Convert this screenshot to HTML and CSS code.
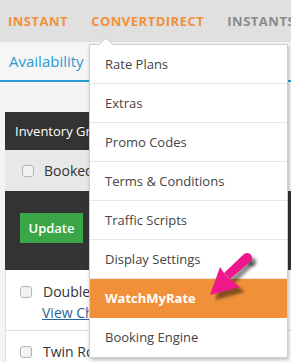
FILE: index.html
```html
<!DOCTYPE html>
<html>
<head>
<meta charset="utf-8">
<title>ConvertDirect</title>
<link rel="stylesheet" href="styles.css">
</head>
<body>
<div class="topnav">
    <span class="nav-item active">Instant</span>
    <span class="nav-item active">ConvertDirect</span>
    <span class="nav-item">InstantSites</span>
</div>

<div class="tabs">
    <span class="tab">Availability</span>
</div>

<div class="content">
    <div class="grid-head">Inventory Grid</div>
    <div class="grid-filter">
        <span class="check"></span>
        <span>Booked</span>
    </div>
    <div class="grid-tools">
        <span class="btn-update">Update</span>
    </div>
    <div class="grid-rows">
        <div class="room">
            <div class="room-line"><span class="check"></span><span>Double Room</span></div>
            <a class="room-link">View Channels</a>
        </div>
        <div class="room last">
            <div class="room-line"><span class="check"></span><span>Twin Room</span></div>
        </div>
    </div>
</div>

<div class="dropdown">
    <div class="dd-item">Rate Plans</div>
    <div class="dd-item">Extras</div>
    <div class="dd-item">Promo Codes</div>
    <div class="dd-item">Terms &amp; Conditions</div>
    <div class="dd-item">Traffic Scripts</div>
    <div class="dd-item">Display Settings</div>
    <div class="dd-item current">WatchMyRate</div>
    <div class="dd-item">Booking Engine</div>
</div>

<svg class="pointer" width="70" height="62" viewBox="0 0 70 62">
    <defs>
        <filter id="soft" x="-20%" y="-20%" width="140%" height="140%">
            <feGaussianBlur stdDeviation="1.6"/>
        </filter>
    </defs>
    <g filter="url(#soft)" transform="translate(5,5)" fill="rgba(0,0,0,.45)">
        <path d="M52 14 L32 33 L27 29 L46 10 Z"/>
        <circle cx="49" cy="12" r="4.5"/>
        <path d="M12 50 L22 22 L29 32 L42 42 Z"/>
    </g>
    <path d="M49 8 C53 8 56 13 53 16 L32 34 L26 28 L45 10 C46 9 47 8 49 8 Z" fill="#f0168c"/>
    <path d="M12 50 L22 22 L28 31 L42 42 Z" fill="#f0168c"/>
</svg>
</body>
</html>
```

FILE: styles.css
```css
* {
	box-sizing: border-box;
}

body {
	margin: 0;
	width: 291px;
	height: 362px;
	overflow: hidden;
	position: relative;
	background: #f4f4f4;
	font-family: "Open Sans", "Liberation Sans", sans-serif;
	color: #333;
}

.topnav {
	height: 42px;
	background: #e0e0e0;
	display: flex;
	padding-left: 8px;
	gap: 23px;
	white-space: nowrap;
	overflow: hidden;
}

.nav-item {
	font-size: 13px;
	font-weight: bold;
	line-height: 42px;
	letter-spacing: 0.5px;
	text-transform: uppercase;
	color: #8a8a8a;
}

.nav-item.active {
	color: #f0913a;
}

.tabs {
	height: 40px;
	background: #f6f6f6;
	border-bottom: 2px solid #2a9ad0;
	padding-left: 9px;
}

.tab {
	display: inline-block;
	font-size: 15px;
	line-height: 38px;
	color: #2a9ad0;
}

.content {
	padding: 30px 0 0 5px;
}

.grid-head {
	height: 38px;
	width: 260px;
	background: #333;
	color: #fff;
	font-size: 13px;
	line-height: 38px;
	padding-left: 10px;
}

.grid-filter {
	height: 41px;
	width: 260px;
	background: #e8e8e8;
	display: flex;
	align-items: center;
	gap: 10px;
	padding-left: 17px;
	font-size: 14px;
}

.check {
	display: inline-block;
	width: 12px;
	height: 12px;
	border: 1px solid #b5b5b5;
	border-radius: 3px;
	background: #f2f2f2;
}

.grid-tools {
	height: 79px;
	background: #333;
	padding: 22px 0 0 15px;
}

.btn-update {
	display: inline-block;
	width: 63px;
	height: 30px;
	background: #3aa648;
	color: #fff;
	font-size: 13px;
	font-weight: 600;
	line-height: 30px;
	text-align: center;
}

.grid-rows {
	background: #fff;
	border-left: 1px solid #e2e2e2;
}

.room {
	padding: 12px 0 7px 14px;
	border-bottom: 1px solid #ddd;
	font-size: 14px;
}

.room.last {
	padding-top: 11px;
}

.room-line {
	display: flex;
	align-items: center;
	gap: 11px;
	line-height: 20px;
}

.room-link {
	display: inline-block;
	margin: 1px 0 0 22px;
	color: #2a6496;
	text-decoration: underline;
	line-height: 20px;
}

.dropdown {
	position: absolute;
	left: 89px;
	top: 44px;
	width: 199px;
	background: #fff;
	border: 1px solid #cfcfcf;
	box-shadow: 1px 2px 4px rgba(0,0,0,.25);
}

.dropdown:before {
	content: "";
	position: absolute;
	left: 11px;
	top: -6px;
	width: 9px;
	height: 9px;
	background: #fff;
	border-left: 1px solid #cfcfcf;
	border-top: 1px solid #cfcfcf;
	transform: rotate(45deg);
}

.dd-item {
	height: 39px;
	line-height: 38px;
	padding-left: 15px;
	font-size: 13px;
	color: #444;
	border-bottom: 1px solid #e6e6e6;
}

.dd-item:last-child {
	border-bottom: 0;
}

.dd-item.current {
	background: #f0913a;
	color: #fff;
	font-weight: bold;
	border-bottom-color: #f0913a;
}

.pointer {
	position: absolute;
	left: 198px;
	top: 245px;
}
```
